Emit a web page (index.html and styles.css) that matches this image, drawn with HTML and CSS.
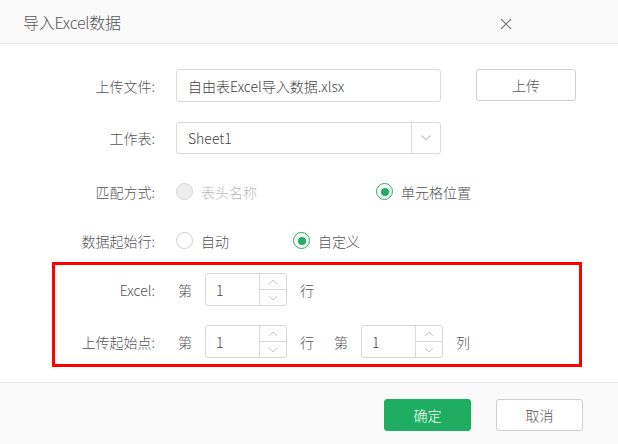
FILE: index.html
```html
<!DOCTYPE html>
<html lang="zh">
<head>
<meta charset="utf-8">
<link rel="stylesheet" href="styles.css">
</head>
<body>
<div class="dialog">
  <div class="header">
    <span class="title">导入Excel数据</span>
    <svg class="close" width="12" height="12" viewBox="0 0 12 12"><path d="M1 1L11 11M11 1L1 11" stroke="#777" stroke-width="1.1" fill="none"/></svg>
  </div>
  <div class="body">
    <div class="row r1">
      <label class="lbl">上传文件:</label>
      <div class="input file">自由表Excel导入数据.xlsx</div>
      <button class="btn upload">上传</button>
    </div>
    <div class="row r2">
      <label class="lbl">工作表:</label>
      <div class="input select">
        <span class="sel-text">Sheet1</span>
        <span class="sel-arrow"><svg width="12" height="8" viewBox="0 0 12 8"><path d="M1.5 1.5L6 6L10.5 1.5" stroke="#c4c4c4" stroke-width="1.2" fill="none"/></svg></span>
      </div>
    </div>
    <div class="row r3">
      <label class="lbl">匹配方式:</label>
      <span class="opt opt-wide disabled"><span class="radio"></span>表头名称</span>
      <span class="opt"><span class="radio checked"></span>单元格位置</span>
    </div>
    <div class="row r4">
      <label class="lbl">数据起始行:</label>
      <span class="opt opt-narrow"><span class="radio"></span>自动</span>
      <span class="opt"><span class="radio checked"></span>自定义</span>
    </div>
    <div class="box">
      <div class="row b1">
        <label class="lbl lbl-box">Excel:</label>
        <span class="word first">第</span>
        <div class="spin"><span class="spin-val">1</span><span class="spin-btns"><span class="sb up"><svg width="10" height="6" viewBox="0 0 10 6"><path d="M1 5L5 1L9 5" stroke="#c8c8c8" stroke-width="1" fill="none"/></svg></span><span class="sb"><svg width="10" height="6" viewBox="0 0 10 6"><path d="M1 1L5 5L9 1" stroke="#c8c8c8" stroke-width="1" fill="none"/></svg></span></span></div>
        <span class="word">行</span>
      </div>
      <div class="row b2">
        <label class="lbl lbl-box">上传起始点:</label>
        <span class="word first">第</span>
        <div class="spin"><span class="spin-val">1</span><span class="spin-btns"><span class="sb up"><svg width="10" height="6" viewBox="0 0 10 6"><path d="M1 5L5 1L9 5" stroke="#c8c8c8" stroke-width="1" fill="none"/></svg></span><span class="sb"><svg width="10" height="6" viewBox="0 0 10 6"><path d="M1 1L5 5L9 1" stroke="#c8c8c8" stroke-width="1" fill="none"/></svg></span></span></div>
        <span class="word">行</span>
        <span class="word second">第</span>
        <div class="spin"><span class="spin-val">1</span><span class="spin-btns"><span class="sb up"><svg width="10" height="6" viewBox="0 0 10 6"><path d="M1 5L5 1L9 5" stroke="#c8c8c8" stroke-width="1" fill="none"/></svg></span><span class="sb"><svg width="10" height="6" viewBox="0 0 10 6"><path d="M1 1L5 5L9 1" stroke="#c8c8c8" stroke-width="1" fill="none"/></svg></span></span></div>
        <span class="word">列</span>
      </div>
    </div>
  </div>
  <div class="footer">
    <button class="btn ok">确定</button>
    <button class="btn cancel">取消</button>
  </div>
</div>
</body>
</html>
```
FILE: styles.css
```css
* { box-sizing: border-box; }
html, body { margin: 0; padding: 0; }
body {
  font-family: "Noto Sans CJK SC", "Noto Sans", sans-serif;
  font-size: 14px;
  font-weight: 300;
  color: #555;
  background: #fff;
}
.dialog {
  width: 618px;
  height: 444px;
  display: flex;
  flex-direction: column;
}
.header {
  height: 44px;
  background: #fafafa;
  border-bottom: 1px solid #e8e8e8;
  display: flex;
  align-items: center;
  justify-content: space-between;
  padding: 0 106px 0 23px;
}
.title {
  font-size: 16px;
  color: #555;
  letter-spacing: -0.3px;
}
.close { margin-top: 4px; }
.body {
  flex: 1;
  padding-top: 25px;
}
.row {
  display: flex;
  align-items: center;
  height: 33px;
}
.r2 { margin-top: 19px; }
.r3 { margin-top: 21px; }
.r4 { margin-top: 16px; }
.lbl {
  width: 155px;
  text-align: right;
  margin-right: 21px;
  color: #555;
  flex: none;
}
.input {
  width: 265px;
  height: 33px;
  border: 1px solid #d9d9d9;
  border-radius: 3px;
  display: flex;
  align-items: center;
  padding-left: 11px;
  color: #444;
}
.select { padding-left: 0; height: 32px; }
.sel-text { flex: 1; padding-left: 11px; }
.sel-arrow {
  width: 29px;
  height: 100%;
  border-left: 1px solid #d9d9d9;
  display: flex;
  align-items: center;
  justify-content: center;
}
.btn {
  font-family: inherit;
  font-size: 14px;
  font-weight: 300;
  height: 32px;
  border-radius: 3px;
  border: 1px solid #d0d0d0;
  background: #fff;
  color: #555;
  padding: 0;
  cursor: pointer;
}
.upload {
  width: 100px;
  margin-left: 35px;
  align-self: flex-start;
}
.opt {
  display: flex;
  align-items: center;
  color: #555;
}
.opt-wide { width: 200px; }
.opt-narrow { width: 117px; }
.radio {
  width: 17px;
  height: 17px;
  border-radius: 50%;
  border: 1px solid #d0d0d0;
  background: #fff;
  margin-right: 8px;
  position: relative;
  flex: none;
}
.disabled { color: #bbb; }
.disabled .radio { background: #eee; border-color: #d4d4d4; }
.radio.checked { border-color: #1fae61; }
.radio.checked::after {
  content: "";
  position: absolute;
  left: 3.5px;
  top: 3.5px;
  width: 8px;
  height: 8px;
  border-radius: 50%;
  background: #1fae61;
}
.box {
  margin: 5px 0 0 52px;
  width: 530px;
  height: 105px;
  border: 3px solid #f00;
  padding-top: 8px;
}
.box .b2 { margin-top: 19px; }
.lbl-box { width: 100px; margin-right: 23px; }
.word { color: #555; margin-right: 13px; }
.word.first { margin-right: 13px; }
.spin + .word { margin-left: 13px; }
.word.second { margin-left: 7px; }
.spin {
  width: 82px;
  height: 33px;
  border: 1px solid #d9d9d9;
  border-radius: 3px;
  display: flex;
  color: #444;
}
.spin-val {
  flex: 1;
  display: flex;
  align-items: center;
  padding-left: 10px;
}
.spin-btns {
  width: 27px;
  border-left: 1px solid #d9d9d9;
  display: flex;
  flex-direction: column;
}
.sb {
  flex: 1;
  display: flex;
  align-items: center;
  justify-content: center;
}
.sb.up { border-bottom: 1px solid #d9d9d9; }
.footer {
  height: 62px;
  background: #fafafa;
  border-top: 1px solid #e8e8e8;
  display: flex;
  justify-content: flex-end;
  padding: 16px 35px 0 0;
  gap: 25px;
}
.ok {
  width: 87px;
  background: #1fae61;
  border-color: #1fae61;
  color: #fff;
}
.cancel { width: 87px; }
```
